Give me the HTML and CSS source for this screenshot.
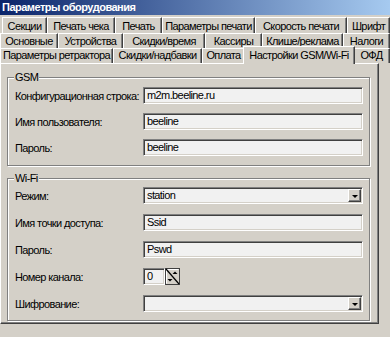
FILE: index.html
```html
<!DOCTYPE html>
<html lang="ru">
<head>
<meta charset="utf-8">
<title>Параметры оборудования</title>
<link rel="stylesheet" href="styles.css">
</head>
<body>
<div class="window">
  <div class="titlebar">Параметры оборудования</div>
  <div class="tabs">
    <div class="tabrow r1">
      <div class="tab">Секции</div>
      <div class="tab">Печать чека</div>
      <div class="tab">Печать</div>
      <div class="tab">Параметры печати</div>
      <div class="tab">Скорость печати</div>
      <div class="tab">Шрифт</div>
    </div>
    <div class="tabrow r2">
      <div class="tab">Основные</div>
      <div class="tab">Устройства</div>
      <div class="tab">Скидки/время</div>
      <div class="tab">Кассиры</div>
      <div class="tab">Клише/реклама</div>
      <div class="tab">Налоги</div>
    </div>
    <div class="tabrow r3">
      <div class="tab">Параметры ретрактора</div>
      <div class="tab">Скидки/надбавки</div>
      <div class="tab">Оплата</div>
      <div class="tab active">Настройки GSM/Wi-Fi</div>
      <div class="tab">ОФД</div>
    </div>
  </div>
  <div class="sheet">
    <fieldset class="group gsm">
      <legend>GSM</legend>
      <div class="rows">
        <div class="field"><span class="label">Конфигурационная строка:</span><div class="edit">m2m.beeline.ru</div></div>
        <div class="field"><span class="label">Имя пользователя:</span><div class="edit">beeline</div></div>
        <div class="field"><span class="label">Пароль:</span><div class="edit">beeline</div></div>
      </div>
    </fieldset>
    <fieldset class="group wifi">
      <legend>Wi-Fi</legend>
      <div class="rows">
        <div class="field"><span class="label">Режим:</span><div class="edit combo"><span class="value">station</span><span class="dropbtn"><span class="arrow"></span></span></div></div>
        <div class="field"><span class="label">Имя точки доступа:</span><div class="edit">Ssid</div></div>
        <div class="field"><span class="label">Пароль:</span><div class="edit">Pswd</div></div>
        <div class="field"><span class="label">Номер канала:</span>
          <div class="spin">
            <div class="edit small">0</div>
            <svg class="spinbtn" width="15" height="17" viewBox="0 0 15 17">
              <rect x="0.5" y="0.5" width="14" height="16" fill="#d4d0c8" stroke="#404040"/>
              <line x1="1.5" y1="1" x2="1.5" y2="15.5" stroke="#ffffff"/>
              <line x1="1" y1="1.5" x2="13.5" y2="1.5" stroke="#ffffff"/>
              <line x1="1" y1="1" x2="14" y2="16" stroke="#000000" stroke-width="1.2"/>
              <polygon points="7.5,6 12.5,6 10,3.5" fill="#000"/>
              <polygon points="2.5,11 7.5,11 5,13.5" fill="#000"/>
            </svg>
          </div>
        </div>
        <div class="field"><span class="label">Шифрование:</span><div class="edit combo"><span class="value"></span><span class="dropbtn"><span class="arrow"></span></span></div></div>
      </div>
    </fieldset>
  </div>
</div>
</body>
</html>
```
FILE: styles.css
```css
* { box-sizing: border-box; }
html, body { margin: 0; }
body {
  width: 390px;
  height: 337px;
  overflow: hidden;
  background: #d4d0c8;
  font: 11px "Liberation Sans", Arial, sans-serif;
  letter-spacing: -0.6px;
  color: #000;
}
.titlebar {
  height: 15px;
  line-height: 15px;
  padding-left: 2px;
  color: #fff;
  font-weight: bold;
  letter-spacing: -0.5px;
  white-space: nowrap;
  background: linear-gradient(to right, #0a246a, #a6caf0);
}
.tabs {
  padding-top: 2px;
  width: 390px;
}
.tabrow {
  display: grid;
}
.r1 { height: 16px; padding-left: 2px; grid-template-columns: 45px 68px 47px 93px 92px 43px; }
.r2 { height: 15px; grid-template-columns: 58px 65px 82px 57px 81px 47px; }
.r3 { height: 15px; grid-template-columns: 113px 89px 43px 108px 37px; }
.tab {
  border-top: 1px solid #fff;
  border-left: 1px solid #fff;
  border-right: 1px solid #404040;
  box-shadow: inset -1px 0 0 #808080;
  text-align: center;
  line-height: 13px;
  white-space: nowrap;
  overflow: hidden;
  background: #d4d0c8;
}
.r1 .tab { padding-top: 2px; }
.r2 .tab { padding-top: 1px; }
.r3 .tab { padding-top: 0; }
.r3 .tab.active {
  position: relative;
  z-index: 1;
  margin: -2px -2px -1px -2px;
  padding-top: 2px;
}
.sheet {
  width: 379px;
  height: 261px;
  border-top: 1px solid #fff;
  border-left: 1px solid #fff;
  border-right: 1px solid #404040;
  border-bottom: 1px solid #404040;
  box-shadow: inset -1px -1px 0 #808080;
  padding: 7px 0 0 6px;
}
.group {
  margin: 0;
  width: 363px;
  min-width: 0;
  padding: 3px 6px 9px 7px;
  border: 1px solid #808080;
  box-shadow: inset 1px 1px 0 #fff, 1px 1px 0 #fff;
}
.group legend {
  margin-left: -1px;
  padding: 0 1px;
  line-height: 13px;
  background: #d4d0c8;
}
.wifi { margin-top: 6px; padding-top: 2px; padding-bottom: 8px; }
.rows {
  display: flex;
  flex-direction: column;
  gap: 9px;
}
.wifi .rows { gap: 10px; }
.field {
  display: flex;
  align-items: center;
  height: 17px;
}
.label {
  width: 128px;
  flex: none;
  white-space: nowrap;
}
.edit {
  width: 220px;
  height: 17px;
  flex: none;
  background: #f1f1f1;
  border-top: 1px solid #808080;
  border-left: 1px solid #808080;
  border-right: 1px solid #fff;
  border-bottom: 1px solid #fff;
  box-shadow: inset 1px 1px 0 #404040, inset -1px -1px 0 #d4d0c8;
  padding: 0 0 0 3px;
  line-height: 15px;
  white-space: nowrap;
}
.combo {
  display: flex;
  padding-right: 1px;
  padding-top: 1px;
  padding-bottom: 1px;
  line-height: 13px;
}
.combo .value { flex: 1; }
.dropbtn {
  width: 13px;
  height: 13px;
  background: #d4d0c8;
  border-top: 1px solid #fff;
  border-left: 1px solid #fff;
  border-right: 1px solid #404040;
  border-bottom: 1px solid #404040;
  box-shadow: inset -1px -1px 0 #808080;
  display: flex;
  align-items: center;
  justify-content: center;
}
.arrow {
  width: 0;
  height: 0;
  border-left: 3px solid transparent;
  border-right: 3px solid transparent;
  border-top: 3px solid #000;
  margin-top: 1px;
}
.spin { display: flex; }
.edit.small { width: 22px; }
.spinbtn { display: block; flex: none; }
```
